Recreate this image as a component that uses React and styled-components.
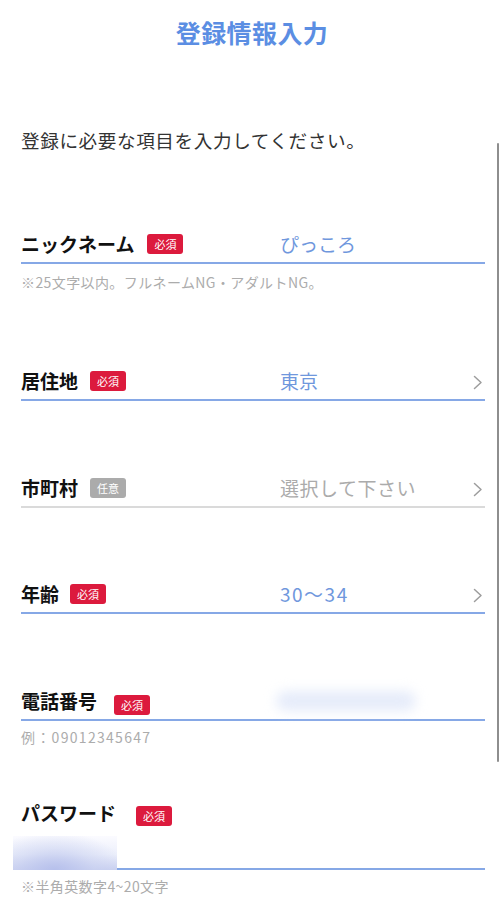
import React from "react";
import styled, { createGlobalStyle } from "styled-components";

const Global = createGlobalStyle`
  html, body { margin: 0; padding: 0; background: #fff; }
  body {
    font-family: "Noto Sans CJK JP", "Noto Sans", "Liberation Sans", sans-serif;
    color: #222;
    -webkit-font-smoothing: antialiased;
  }
`;

const Page = styled.div`
  width: 500px;
  min-height: 922px;
  background: #fff;
`;

const Header = styled.header`
  height: 64px;
  display: flex;
  align-items: center;
  justify-content: center;
  padding-left: 4px;
  box-sizing: border-box;
`;

const Title = styled.h1`
  margin: 0;
  font-size: 25px;
  font-weight: 700;
  color: #5b8ee3;
  letter-spacing: 0.4px;
  line-height: 1;
`;

const Intro = styled.p`
  margin: 63px 0 0;
  padding: 0 21px;
  font-size: 18.6px;
  line-height: 26px;
  letter-spacing: 0.6px;
  color: #333;
`;

const Form = styled.div`
  padding: 0 15px 30px 21px;
`;

const Field = styled.div`
  margin-top: ${(p) => p.$mt}px;
`;

const Row = styled.div`
  display: grid;
  grid-template-columns: 259px 1fr auto;
  align-items: center;
  height: 38px;
  box-sizing: border-box;
  border-bottom: 2px solid ${(p) => (p.$muted ? "#dadada" : "#86a8e6")};
`;

const LabelGroup = styled.div`
  display: flex;
  align-items: center;
  gap: ${(p) => p.$gap}px;
`;

const Label = styled.span`
  font-size: 19px;
  font-weight: 700;
  color: #111;
  line-height: 24px;
`;

const Badge = styled.span`
  display: inline-flex;
  align-items: center;
  justify-content: center;
  width: 36px;
  height: 20px;
  border-radius: 3px;
  background: ${(p) => (p.$optional ? "#ababab" : "#dc1a3d")};
  color: #fff;
  font-size: 11px;
  line-height: 1;
  margin-top: ${(p) => p.$drop || 0}px;
`;

const Value = styled.span`
  font-size: 19px;
  line-height: 24px;
  letter-spacing: ${(p) => p.$spacing || 0}px;
  color: ${(p) => (p.$placeholder ? "#ababab" : "#6f97dd")};
`;

const Chevron = styled.svg`
  width: 10px;
  height: 15px;
  margin-right: 2px;
  margin-top: 2px;
`;

const Blurred = styled.div`
  width: 140px;
  height: 20px;
  margin-left: -4px;
  border-radius: 10px;
  background: #e6ecfa;
  filter: blur(6px);
`;

const Note = styled.p`
  margin: ${(p) => p.$mt}px 0 0;
  font-size: 14px;
  line-height: 20px;
  letter-spacing: ${(p) => p.$spacing || 0}px;
  color: #acacac;
`;

const LabelRow = styled.div`
  display: flex;
  align-items: center;
  gap: 20px;
  height: 30px;
`;

const InputRow = styled.div`
  display: flex;
  align-items: flex-end;
  height: 42px;
  box-sizing: border-box;
  border-bottom: 2px solid #86a8e6;
`;

const MaskedInput = styled.div`
  width: 104px;
  height: 34px;
  margin-left: -8px;
  margin-bottom: -2px;
  background:
    radial-gradient(ellipse at 40% 100%, rgba(180, 190, 235, 0.9) 0%, rgba(200, 208, 240, 0.5) 45%, rgba(255, 255, 255, 0) 80%),
    linear-gradient(180deg, #fbfbff 0%, #eceffb 55%, #c9d0f0 100%);
`;

const ScrollIndicator = styled.div`
  position: fixed;
  top: 143px;
  right: 1px;
  width: 2.5px;
  height: 619px;
  border-radius: 2px;
  background: #8e8e8e;
`;

const Arrow = () => (
  <Chevron viewBox="0 0 10 15">
    <polyline points="1.5,1.5 8,7.5 1.5,13.5" fill="none" stroke="#9d9d9d" strokeWidth="1.5" strokeLinecap="round" strokeLinejoin="round" />
  </Chevron>
);

export default function App() {
  return (
    <Page>
      <Global />
      <Header>
        <Title>登録情報入力</Title>
      </Header>
      <Intro>登録に必要な項目を入力してください。</Intro>
      <Form>
        <Field $mt={73}>
          <Row>
            <LabelGroup $gap={13}>
              <Label>ニックネーム</Label>
              <Badge>必須</Badge>
            </LabelGroup>
            <Value>ぴっころ</Value>
          </Row>
          <Note $mt={8} $spacing={0.4}>※25文字以内。フルネームNG・アダルトNG。</Note>
        </Field>

        <Field $mt={71}>
          <Row>
            <LabelGroup $gap={12}>
              <Label>居住地</Label>
              <Badge>必須</Badge>
            </LabelGroup>
            <Value>東京</Value>
            <Arrow />
          </Row>
        </Field>

        <Field $mt={69}>
          <Row $muted>
            <LabelGroup $gap={12}>
              <Label>市町村</Label>
              <Badge $optional>任意</Badge>
            </LabelGroup>
            <Value $placeholder $spacing={0.5}>選択して下さい</Value>
            <Arrow />
          </Row>
        </Field>

        <Field $mt={68}>
          <Row>
            <LabelGroup $gap={11}>
              <Label>年齢</Label>
              <Badge>必須</Badge>
            </LabelGroup>
            <Value $spacing={1.5}>30〜34</Value>
            <Arrow />
          </Row>
        </Field>

        <Field $mt={69}>
          <Row>
            <LabelGroup $gap={17}>
              <Label>電話番号</Label>
              <Badge $drop={8}>必須</Badge>
            </LabelGroup>
            <Blurred />
          </Row>
          <Note $mt={6} $spacing={1.3}>例：09012345647</Note>
        </Field>

        <Field $mt={51}>
          <LabelRow>
            <Label>パスワード</Label>
            <Badge $drop={6}>必須</Badge>
          </LabelRow>
          <InputRow>
            <MaskedInput />
          </InputRow>
          <Note $mt={6} $spacing={0.4}>※半角英数字4~20文字</Note>
        </Field>
      </Form>
      <ScrollIndicator />
    </Page>
  );
}
